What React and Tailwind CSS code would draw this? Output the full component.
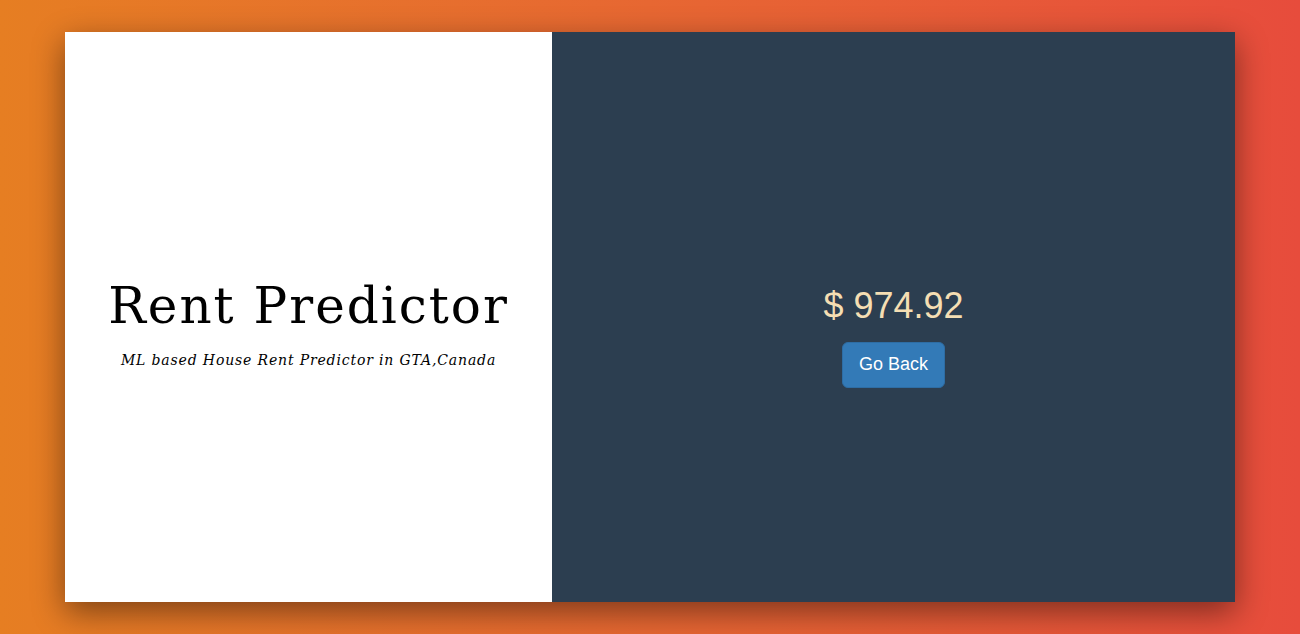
export default function App() {
  return (
    <div className="h-[634px] w-full overflow-hidden bg-linear-to-r from-[#e67e22] to-[#e74c3c] pt-[32px]">
      <div className="mx-auto flex h-[570px] w-[1170px] shadow-[0_10px_30px_rgba(0,0,0,0.45)]">
        <div className="flex w-[487px] flex-col items-center justify-center bg-white pt-[15px]">
          <h1 className="text-[50px] leading-[1.1] tracking-[2px] text-black" style={{ fontFamily: '"DejaVu Serif", serif' }}>
            Rent Predictor
          </h1>
          <p className="mt-[16px] text-[14px] italic tracking-[0.85px] text-black" style={{ fontFamily: '"DejaVu Serif", serif' }}>
            ML based House Rent Predictor in GTA,Canada
          </p>
        </div>
        <div className="flex flex-1 flex-col items-center justify-center bg-[#2c3e50] pt-[40px]">
          <div className="text-[36px] leading-[1.1] text-[#f5deb3]" style={{ fontFamily: '"Liberation Sans", Arial, sans-serif' }}>
            $ 974.92
          </div>
          <button className="mt-[16px] rounded-[6px] border border-[#2e6da4] bg-[#337ab7] px-[16px] py-[10px] text-[18px] leading-[1.3333] text-white" style={{ fontFamily: '"Liberation Sans", Arial, sans-serif' }}>
            Go Back
          </button>
        </div>
      </div>
    </div>
  );
}
